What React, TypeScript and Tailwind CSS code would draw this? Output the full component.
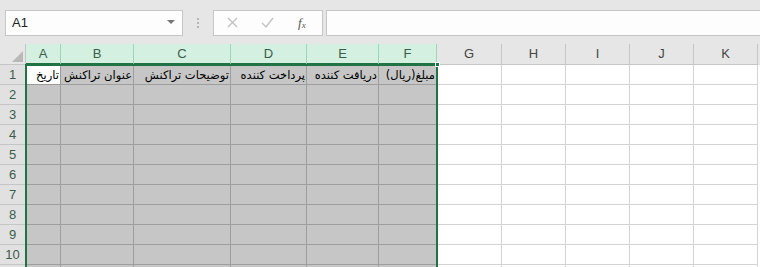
import React from "react";

const cols = [
  { id: "A", w: 35, sel: true },
  { id: "B", w: 73, sel: true },
  { id: "C", w: 97, sel: true },
  { id: "D", w: 76, sel: true },
  { id: "E", w: 72, sel: true },
  { id: "F", w: 58, sel: true },
  { id: "G", w: 65, sel: false },
  { id: "H", w: 64, sel: false },
  { id: "I", w: 64, sel: false },
  { id: "J", w: 64, sel: false },
  { id: "K", w: 64, sel: false },
];

const headers = ["تاریخ", "عنوان تراکنش", "توضیحات تراکنش", "پرداخت کننده", "دریافت کننده", "مبلغ(ریال)"];
const rows = [1, 2, 3, 4, 5, 6, 7, 8, 9, 10, 11];

export default function App() {
  return (
    <div className="w-[760px] h-[267px] overflow-hidden bg-[#e6e6e6] font-['Segoe_UI','Liberation_Sans',sans-serif]">
      {/* Formula bar */}
      <div className="flex items-center h-[44px] pt-[1px]">
        <div className="ml-[5px] w-[178px] h-[26px] bg-[#fdfdfd] border border-[#c6c6c6] flex items-center justify-between pl-[6px] pr-[7px]">
          <span className="text-[13px] text-[#222]">A1</span>
          <svg width="8" height="5" viewBox="0 0 8 5"><path d="M0 0h8L4 4z" fill="#777" /></svg>
        </div>
        <div className="w-[30px] flex flex-col items-center gap-[2px]">
          <span className="w-[2px] h-[2px] bg-[#b4b4b4]" />
          <span className="w-[2px] h-[2px] bg-[#b4b4b4]" />
          <span className="w-[2px] h-[2px] bg-[#b4b4b4]" />
        </div>
        <div className="w-[110px] h-[26px] bg-[#fdfdfd] border border-[#c6c6c6] flex items-center">
          <svg className="ml-[13px]" width="11" height="11" viewBox="0 0 11 11">
            <path d="M1 1l9 9M10 1l-9 9" stroke="#c2c2c2" strokeWidth="1.4" />
          </svg>
          <svg className="ml-[23px]" width="13" height="11" viewBox="0 0 13 11">
            <path d="M1 6l4 4 7-9" stroke="#c2c2c2" strokeWidth="1.4" fill="none" />
          </svg>
          <span className="ml-[24px] text-[13px] italic text-[#555] font-['Liberation_Serif',serif]">
            f<sub className="text-[9px] align-baseline relative top-[1px]">x</sub>
          </span>
        </div>
        <div className="ml-[3px] flex-1 h-[26px] bg-[#fdfdfd] border-y border-l border-[#c6c6c6]" />
      </div>

      {/* Grid */}
      <div className="relative bg-white">
        {/* column header row */}
        <div className="flex h-[21px] bg-[#e6e6e6]">
          <div className="w-[26px] shrink-0 border-r border-b border-[#c6c6c6] relative">
            <svg className="absolute right-[2px] bottom-[2px]" width="11" height="11" viewBox="0 0 11 11">
              <path d="M11 0v11H0z" fill="#b8b8b8" />
            </svg>
          </div>
          {cols.map((c) => (
            <div
              key={c.id}
              style={{ width: c.w }}
              className={
                c.sel
                  ? "shrink-0 flex items-center justify-center text-[13px] text-[#3d5c49] bg-[#d3f0e0] border-r border-b border-[#9fd5b7] border-b-[#217346] border-b-2"
                  : "shrink-0 flex items-center justify-center text-[13px] text-[#444] border-r border-b border-[#c6c6c6]"
              }
            >
              {c.id}
            </div>
          ))}
        </div>

        {rows.map((r) => (
          <div key={r} className="flex h-[20px]">
            <div className="w-[26px] shrink-0 bg-[#e1e1e1] border-r border-b border-[#c6c6c6] flex items-center justify-center text-[13px] text-[#3d5c49]">
              {r < 11 ? r : ""}
            </div>
            {cols.map((c, i) => {
              const active = r === 1 && i === 0;
              const text = r === 1 && i < 6 ? headers[i] : "";
              return (
                <div
                  key={c.id}
                  style={{ width: c.w }}
                  className={
                    active
                      ? "shrink-0 bg-white border-r border-b border-[#9b9b9b] flex items-center justify-end pr-[1px] overflow-visible whitespace-nowrap"
                      : c.sel
                      ? "shrink-0 bg-[#c6c6c6] border-r border-b border-[#9e9e9e] flex items-center justify-end pr-[1px] overflow-visible whitespace-nowrap"
                      : "shrink-0 bg-white border-r border-b border-[#d4d4d4]"
                  }
                >
                  {text && (
                    <span dir="rtl" className="text-[11.5px] leading-none pt-[2px] text-black font-['DejaVu_Sans',sans-serif]">
                      {text}
                    </span>
                  )}
                </div>
              );
            })}
          </div>
        ))}

        {/* selection border */}
        <div className="absolute left-[25px] top-[20px] w-[413px] h-[240px] border-l-2 border-r-2 border-t-2 border-[#217346] pointer-events-none" />
        <div className="absolute left-[435px] top-[18px] w-[5px] h-[5px] bg-[#217346] border border-white pointer-events-none" />
      </div>
    </div>
  );
}
